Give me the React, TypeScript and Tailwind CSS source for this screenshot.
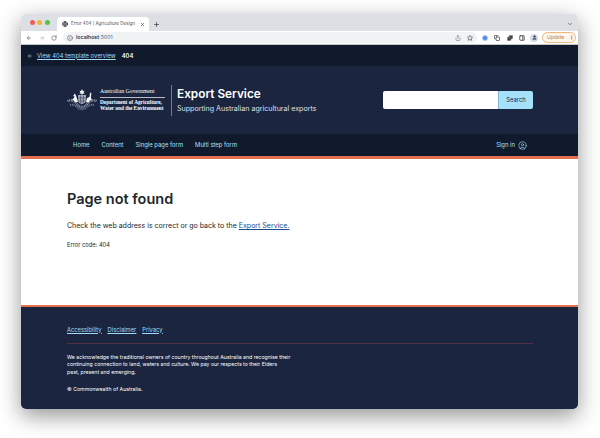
import { ArrowLeft, ArrowRight, RotateCw, Globe, Info, Plus, X, ChevronDown, Share, Star, Copy, Puzzle, PanelRight, User, CircleUser, EllipsisVertical } from "lucide-react";

const Crest = () => (
  <svg width="30" height="22" viewBox="0 0 30 22" fill="none" className="shrink-0">
    {/* wattle */}
    <path d="M0.5 12 Q5 10 9 14 Q12 18 15 18 Q18 18 21 14 Q25 10 29.5 12" stroke="#8d94a5" strokeWidth="2.4" strokeDasharray="1 0.7" />
    <path d="M3 16 Q8 15 11 19 Q15 21.5 19 19 Q22 15 27 16" stroke="#747c90" strokeWidth="2" strokeDasharray="1 0.8" />
    {/* shield */}
    <path d="M11 6 L19 6 L18.7 13 Q15 17 11.3 13 Z" fill="#aab0bd" />
    <path d="M13.6 6.5v8M16.3 6.5v8M11.3 9h7.4M11.5 12h7" stroke="#1b2540" strokeWidth="0.5" />
    {/* star */}
    <path d="M15 0 L15.9 2 L17.6 1.7 L16.6 3.2 L17.6 4.7 L15.9 4.4 L15 6 L14.1 4.4 L12.4 4.7 L13.4 3.2 L12.4 1.7 L14.1 2 Z" fill="#f3f4f6" />
    {/* kangaroo */}
    <path d="M11 13 L9.5 8 L8.5 5.5 L7.3 4.5 L7 6 L6 7 L7.6 7.5 L6.5 9.5 L4.5 11 L6.5 11 L8 13 Z" fill="#f5f6f8" />
    {/* emu */}
    <path d="M19 13 L20 9 L22.5 8 L23 4 L24.3 3.6 L24 8.6 L24.8 11 L22.8 11.5 L21.5 13.5 Z" fill="#f5f6f8" />
  </svg>
);

export default function App() {
  return (
    <div className="w-[600px] h-[438px] bg-white pt-[14px] pl-[21px] overflow-hidden font-['Inter',sans-serif]">
      <div className="w-[557px] h-[395px] rounded-[5px] overflow-hidden flex flex-col shadow-[0_7px_22px_rgba(0,0,0,0.42)]">
        {/* browser tabs */}
        <div className="h-[17px] shrink-0 bg-[#dcdfe3] flex items-end">
          <div className="flex items-center gap-[2.5px] pl-[8.5px] pb-[1px] w-[36px] h-full shrink-0">
            <span className="w-[5px] h-[5px] rounded-full bg-[#ec5f57]" />
            <span className="w-[5px] h-[5px] rounded-full bg-[#f1b52f]" />
            <span className="w-[5px] h-[5px] rounded-full bg-[#5ac23f]" />
          </div>
          <div className="w-[92px] h-[14px] shrink-0 bg-white rounded-t-[4px] flex items-center pl-[5px] pr-[4px] gap-[3px] text-[#4b4f54]">
            <Globe size={6} strokeWidth={3} className="text-[#33363b] shrink-0" />
            <span className="text-[4.5px] leading-none whitespace-nowrap flex-1">Error 404 | Agriculture Design</span>
            <X size={5} strokeWidth={3} className="shrink-0" />
          </div>
          <Plus size={7} strokeWidth={2.5} className="ml-[4px] mb-[3px] text-[#3c4043]" />
          <ChevronDown size={6} strokeWidth={3} className="ml-auto mr-[5px] mb-[4px] text-[#55585c]" />
        </div>
        {/* browser toolbar */}
        <div className="h-[14px] shrink-0 bg-white border-b border-[#c4c6ca] flex items-center pl-[5px] text-[#5f6368]">
          <ArrowLeft size={6} strokeWidth={2.5} className="shrink-0" />
          <ArrowRight size={6} strokeWidth={2.5} className="ml-[7px] shrink-0 text-[#b4b7bb]" />
          <RotateCw size={6} strokeWidth={2.5} className="ml-[6px] shrink-0" />
          <div className="ml-[6px] w-[414px] h-[11px] shrink-0 bg-[#f0f2f4] rounded-full flex items-center pl-[4px] pr-[4px]">
            <Info size={6} strokeWidth={2.5} className="shrink-0" />
            <span className="ml-[3px] text-[5.3px] leading-none text-[#5f6368]">
              <span className="text-[#202124] font-medium">localhost</span>:3001
            </span>
            <Share size={6} strokeWidth={2} className="ml-auto shrink-0" />
            <Star size={6} strokeWidth={2.5} className="ml-[6px] shrink-0 text-[#3c4043]" />
          </div>
          <span className="ml-[5px] w-[6px] h-[6px] rounded-full bg-[#4f86e3] border border-[#a9c5f5] shrink-0" />
          <Copy size={6} strokeWidth={3} className="ml-[6px] shrink-0 text-[#44474b]" />
          <Puzzle size={6} strokeWidth={3} fill="currentColor" className="ml-[7px] shrink-0 text-[#44474b]" />
          <PanelRight size={6} strokeWidth={3} className="ml-[6px] shrink-0 text-[#33363b]" />
          <span className="ml-[5px] w-[8px] h-[8px] rounded-full bg-[#d5dbe6] flex items-center justify-center shrink-0">
            <User size={5} strokeWidth={3} fill="currentColor" className="text-[#3a4560]" />
          </span>
          <span className="ml-[4px] w-[34px] h-[11px] shrink-0 rounded-full border border-[#efb778] bg-[#fdf6ec] flex items-center justify-between pl-[4px] pr-[1px] text-[5px] leading-none text-[#b9854c]">
            Update
            <EllipsisVertical size={5} strokeWidth={3} />
          </span>
        </div>
        {/* template bar */}
        <div className="h-[21px] shrink-0 bg-[#111a2c] flex items-center pl-[6px] text-[5.85px] leading-none">
          <ArrowLeft size={6} strokeWidth={2} className="shrink-0 text-[#9fdcf7]" />
          <a className="ml-[4px] text-[#9fdcf7] underline">View 404 template overview</a>
          <span className="ml-[6px] text-white font-semibold">404</span>
        </div>
        {/* header */}
        <div className="h-[68px] shrink-0 bg-[#1b2540] flex items-center pl-[46px] pr-[45px]">
          <div className="flex items-center">
            <Crest />
            <div className="ml-[3px] w-[65px] font-['Liberation_Serif',serif] text-white text-[5.3px] leading-[5.8px] whitespace-nowrap">
              <div className="pb-[2.5px] border-b border-white/70 text-[5.8px]">Australian Government</div>
              <div className="pt-[2px] font-bold">Department of Agriculture,</div>
              <div className="font-bold">Water and the Environment</div>
            </div>
            <div className="ml-[6px] w-px h-[31px] bg-white/40" />
            <div className="ml-[5px] text-white">
              <div className="text-[11.8px] leading-[15px] font-semibold whitespace-nowrap">Export Service</div>
              <div className="mt-[2px] text-[7.1px] leading-[10px] text-[#dde2ea] whitespace-nowrap">Supporting Australian agricultural exports</div>
            </div>
          </div>
          <div className="ml-auto flex h-[18px] rounded-[2px] overflow-hidden">
            <div className="w-[115px] bg-white" />
            <div className="w-[35px] bg-[#a6e1fc] border-l border-[#7fb5d2] flex items-center justify-center text-[5.9px] text-[#1b2540]">Search</div>
          </div>
        </div>
        {/* nav */}
        <div className="h-[22px] shrink-0 bg-[#111a2c] flex items-center pl-[52px] pr-[51px] gap-[12px] text-[5.9px] leading-none text-[#a6e1fc]">
          <span>Home</span>
          <span>Content</span>
          <span>Single page form</span>
          <span>Multi step form</span>
          <span className="ml-auto flex items-center gap-[3px]">
            Sign in
            <CircleUser size={9} strokeWidth={1.6} />
          </span>
        </div>
        <div className="h-[3px] shrink-0 bg-[#e36f4f]" />
        {/* main */}
        <main className="h-[146px] shrink-0 bg-white pl-[46px] pt-[30px] text-[#22272b]">
          <h1 className="text-[14.5px] leading-[20px] font-semibold">Page not found</h1>
          <p className="mt-[12px] text-[7.03px] leading-[10px]">
            Check the web address is correct or go back to the <a className="text-[#1c4a8a] underline">Export Service.</a>
          </p>
          <p className="mt-[10px] text-[5.75px] leading-[8px]">Error code: 404</p>
        </main>
        <div className="h-[1.5px] shrink-0 bg-[#e36f4f]" />
        {/* footer */}
        <footer className="flex-1 bg-[#1b2540] pt-[19px] pl-[46px] pr-[45px] text-[5.2px] leading-[7.7px] text-white">
          <div className="flex gap-[6px] text-[5.8px] leading-[8px] text-[#9fdcf7] underline">
            <a>Accessibility</a>
            <a>Disclaimer</a>
            <a>Privacy</a>
          </div>
          <div className="mt-[9px] h-[1.5px] bg-[#4d3140]" />
          <p className="mt-[9.5px] whitespace-nowrap">
            We acknowledge the traditional owners of country throughout Australia and recognise their
            <br />
            continuing connection to land, waters and culture. We pay our respects to their Elders
            <br />
            past, present and emerging.
          </p>
          <p className="mt-[9px]">© Commonwealth of Australia.</p>
        </footer>
      </div>
    </div>
  );
}
